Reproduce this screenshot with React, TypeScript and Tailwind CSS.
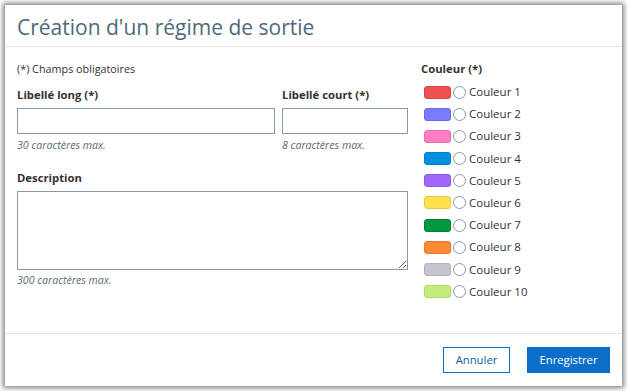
const colours = [
  { name: "Couleur 1", bg: "bg-[#f05252]", border: "border-[#d84545]" },
  { name: "Couleur 2", bg: "bg-[#7b7bff]", border: "border-[#6b6be8]" },
  { name: "Couleur 3", bg: "bg-[#ff7ec4]", border: "border-[#e86eae]" },
  { name: "Couleur 4", bg: "bg-[#0092e0]", border: "border-[#0080c8]" },
  { name: "Couleur 5", bg: "bg-[#a066ff]", border: "border-[#8d57e8]" },
  { name: "Couleur 6", bg: "bg-[#ffe04d]", border: "border-[#e8cb45]" },
  { name: "Couleur 7", bg: "bg-[#00993d]", border: "border-[#007f33]" },
  { name: "Couleur 8", bg: "bg-[#ff8a35]", border: "border-[#e8782c]" },
  { name: "Couleur 9", bg: "bg-[#c6c6d2]", border: "border-[#b3b3c0]" },
  { name: "Couleur 10", bg: "bg-[#c4ec7c]", border: "border-[#b0d86c]" },
];

function Field({
  label,
  hint,
  className,
}: {
  label: string;
  hint: string;
  className: string;
}) {
  return (
    <div className={className}>
      <p className="text-[11.3px] font-bold leading-[15px] text-[#333]">{label}</p>
      <input
        type="text"
        className="mt-[6px] block h-[26px] w-full border border-[#8a9ba3] bg-white outline-none"
      />
      <p className="mt-[4px] text-[10.6px] italic leading-[14px] text-[#5a6b73]">{hint}</p>
    </div>
  );
}

export default function App() {
  return (
    <div
      className="min-h-[391px] w-[628px] bg-white p-[5px] pr-[6px]"
      style={{ fontFamily: '"Open Sans", "Noto Sans", sans-serif' }}
    >
      <div className="flex h-[381px] flex-col bg-white shadow-[0_0_5px_2px_rgba(0,0,0,0.5)]">
        <header className="flex h-[42px] items-center border-b border-[#e2e8e8] px-[12px] pt-[3px]">
          <h1 className="text-[21px] leading-none text-[#4e6a78]">Création d'un régime de sortie</h1>
        </header>

        <div className="flex flex-1 px-[12px] pt-[15px]">
          <div className="w-[391px]">
            <p className="text-[10.8px] leading-[14px] text-[#333]">(*) Champs obligatoires</p>
            <div className="mt-[11px] flex gap-[7px]">
              <Field label="Libellé long (*)" hint="30 caractères max." className="w-[258px]" />
              <Field label="Libellé court (*)" hint="8 caractères max." className="w-[126px]" />
            </div>
            <p className="mt-[18px] text-[11.3px] font-bold leading-[15px] text-[#333]">Description</p>
            <textarea className="mt-[6px] block h-[79px] w-full border border-[#8a9ba3] bg-white outline-none" />
            <p className="mt-[3px] text-[10.6px] italic leading-[14px] text-[#5a6b73]">300 caractères max.</p>
          </div>

          <div className="ml-[13px]">
            <p className="text-[11.3px] font-bold leading-[14px] text-[#333]">Couleur (*)</p>
            <ul className="mt-[9px] flex flex-col gap-[8.2px] pl-[3px]">
              {colours.map((c) => (
                <li key={c.name} className="flex h-[14px] items-center">
                  <span className={`h-[13px] w-[27px] rounded-[3px] border ${c.bg} ${c.border}`} />
                  <span className="ml-[2px] h-[13px] w-[13px] rounded-full border border-[#8a9ba3] bg-white" />
                  <span className="ml-[3px] text-[11.5px] leading-[14px] text-[#333]">{c.name}</span>
                </li>
              ))}
            </ul>
          </div>
        </div>

        <footer className="flex h-[53px] items-center justify-end gap-[17px] border-t border-[#e2e8e8] pr-[12px]">
          <button className="h-[26px] w-[67px] border border-[#0b6fc7] bg-white text-[11.3px] text-[#0b5fa8]">
            Annuler
          </button>
          <button className="h-[26px] w-[83px] bg-[#0b6fc9] text-[11.3px] text-white">Enregistrer</button>
        </footer>
      </div>
    </div>
  );
}
